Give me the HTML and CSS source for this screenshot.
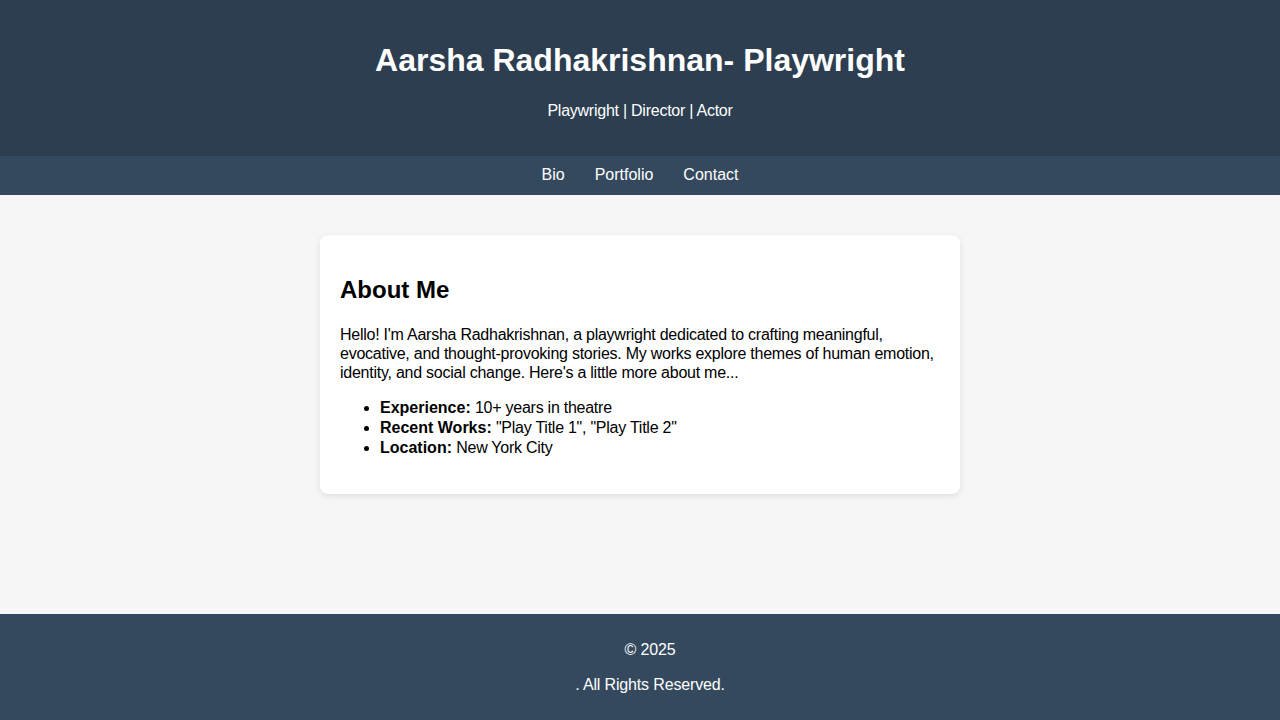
FILE: index.html
```html
<!DOCTYPE html>
<html lang="en">
<head>
<meta charset="utf-8">
<title>Aarsha Radhakrishnan- Playwright</title>
<link rel="stylesheet" href="styles.css">
</head>
<body>
<header class="site-header">
  <h1 class="site-title">Aarsha Radhakrishnan- Playwright</h1>
  <p class="site-tagline">Playwright | Director | Actor</p>
</header>
<nav class="site-nav">
  <a href="#bio">Bio</a>
  <a href="#portfolio">Portfolio</a>
  <a href="#contact">Contact</a>
</nav>
<main class="site-main">
  <section class="card" id="bio">
    <h2 class="card-title">About Me</h2>
    <p class="card-text">Hello! I'm Aarsha Radhakrishnan, a playwright dedicated to crafting meaningful, evocative, and thought-provoking stories. My works explore themes of human emotion, identity, and social change. Here's a little more about me...</p>
    <ul class="facts">
      <li><strong>Experience:</strong> 10+ years in theatre</li>
      <li><strong>Recent Works:</strong> "Play Title 1", "Play Title 2"</li>
      <li><strong>Location:</strong> New York City</li>
    </ul>
  </section>
</main>
<footer class="site-footer">
  <p>&copy; 2025</p>
  <p>. All Rights Reserved.</p>
</footer>
</body>
</html>
```
FILE: styles.css
```css
html, body {
  margin: 0;
  padding: 0;
}
body {
  font-family: "Liberation Sans", Arial, sans-serif;
  font-size: 16px;
  background: #f6f6f6;
  color: #000;
  min-height: 100vh;
  display: flex;
  flex-direction: column;
}
.site-header {
  background: #2c3e50;
  color: #fff;
  text-align: center;
  padding: 21px 0 20px;
}
.site-title {
  font-size: 32px;
  margin: 21px 0 23px;
}
.site-tagline {
  margin: 16px 0;
  letter-spacing: -0.25px;
}
.site-nav {
  background: #34495e;
  display: flex;
  justify-content: center;
  gap: 30px;
  padding: 10px 0 11px;
  line-height: 18px;
}
.site-nav a {
  color: #fff;
  text-decoration: none;
}
.site-main {
  flex: 1;
  padding: 40px 20px;
}
.card {
  max-width: 600px;
  margin: 0 auto;
  background: #fff;
  padding: 20px;
  border-radius: 8px;
  box-shadow: 0 2px 6px rgba(0, 0, 0, 0.1);
}
.card-title {
  font-size: 24px;
  margin: 21px 0 21px;
}
.card-text {
  margin: 16px 0;
  line-height: 19px;
  letter-spacing: -0.25px;
}
.facts {
  margin: 16px 0;
  padding-left: 40px;
  line-height: 20px;
  letter-spacing: -0.25px;
}
.facts strong {
  letter-spacing: 0;
}
.site-footer {
  background: #34495e;
  color: #fff;
  text-align: center;
  padding: 10px 0 10px 20px;
}
.site-footer p {
  margin: 16px 0;
  line-height: 19px;
  letter-spacing: -0.15px;
}
```
